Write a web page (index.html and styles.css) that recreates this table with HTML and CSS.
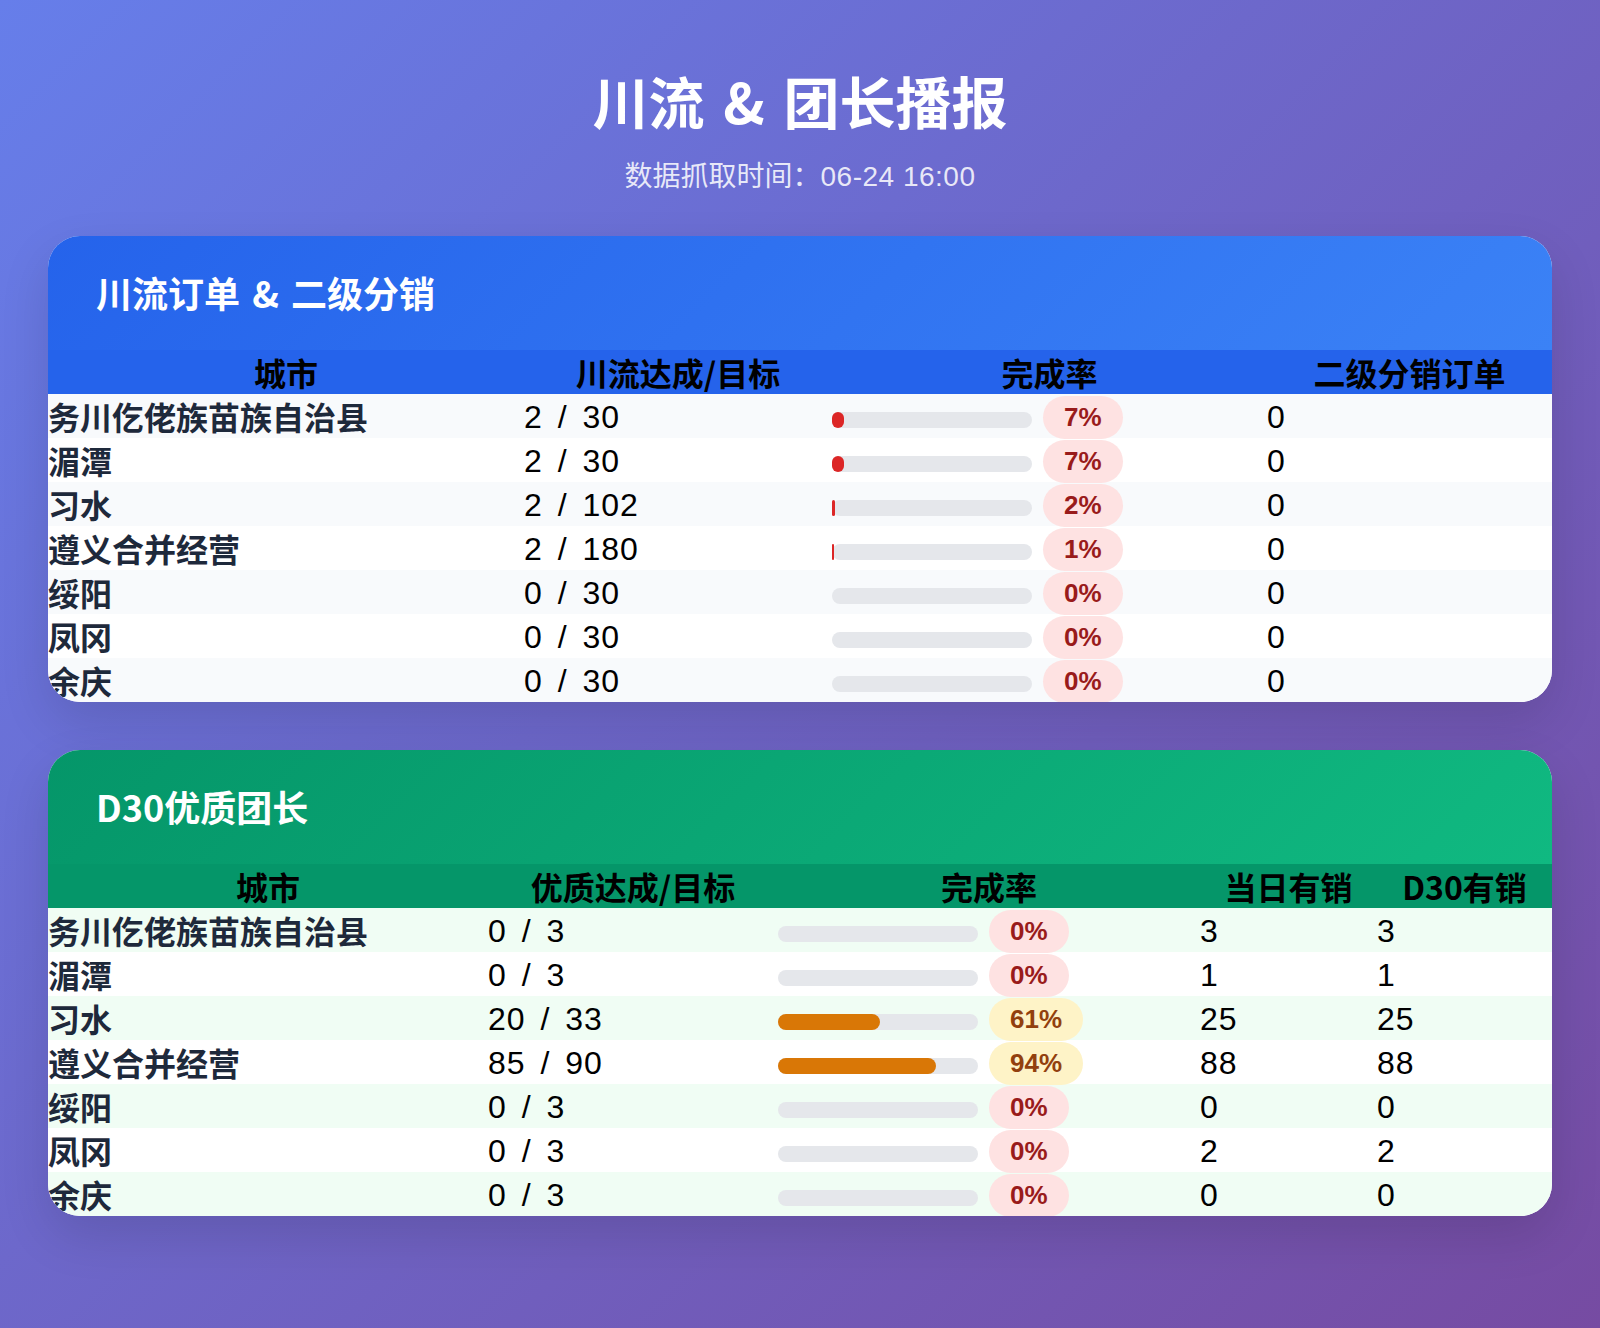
FILE: index.html
```html
<!DOCTYPE html>
<html lang="zh-CN">
<head>
<meta charset="utf-8">
<title>川流 &amp; 团长播报</title>
<link rel="stylesheet" href="styles.css">
</head>
<body>
<div class="page">
  <header class="header">
    <h1 class="title">川流 &amp; 团长播报</h1>
    <p class="subtitle">数据抓取时间：<span class="time">06-24 16:00</span></p>
  </header>

  <section class="card card-blue">
    <div class="card-head"><h2 class="card-title">川流订单 &amp; 二级分销</h2></div>
    <table class="table">
      <colgroup>
        <col class="b1"><col class="b2"><col class="b3"><col class="b4">
      </colgroup>
      <thead>
        <tr><th>城市</th><th>川流达成/目标</th><th>完成率</th><th>二级分销订单</th></tr>
      </thead>
      <tbody>
        <tr><td class="city">务川仡佬族苗族自治县</td><td class="num">2 / 30</td><td><div class="rate"><div class="track"><div class="fill fill-red" style="width:5.9%"></div></div><span class="badge badge-red">7%</span></div></td><td class="num">0</td></tr>
        <tr><td class="city">湄潭</td><td class="num">2 / 30</td><td><div class="rate"><div class="track"><div class="fill fill-red" style="width:5.9%"></div></div><span class="badge badge-red">7%</span></div></td><td class="num">0</td></tr>
        <tr><td class="city">习水</td><td class="num">2 / 102</td><td><div class="rate"><div class="track"><div class="fill fill-red" style="width:1.7%"></div></div><span class="badge badge-red">2%</span></div></td><td class="num">0</td></tr>
        <tr><td class="city">遵义合并经营</td><td class="num">2 / 180</td><td><div class="rate"><div class="track"><div class="fill fill-red" style="width:0.9%"></div></div><span class="badge badge-red">1%</span></div></td><td class="num">0</td></tr>
        <tr><td class="city">绥阳</td><td class="num">0 / 30</td><td><div class="rate"><div class="track"><div class="fill fill-red" style="width:0%"></div></div><span class="badge badge-red">0%</span></div></td><td class="num">0</td></tr>
        <tr><td class="city">凤冈</td><td class="num">0 / 30</td><td><div class="rate"><div class="track"><div class="fill fill-red" style="width:0%"></div></div><span class="badge badge-red">0%</span></div></td><td class="num">0</td></tr>
        <tr><td class="city">余庆</td><td class="num">0 / 30</td><td><div class="rate"><div class="track"><div class="fill fill-red" style="width:0%"></div></div><span class="badge badge-red">0%</span></div></td><td class="num">0</td></tr>
      </tbody>
    </table>
  </section>

  <section class="card card-green">
    <div class="card-head"><h2 class="card-title">D30优质团长</h2></div>
    <table class="table">
      <colgroup>
        <col class="g1"><col class="g2"><col class="g3"><col class="g4"><col class="g5">
      </colgroup>
      <thead>
        <tr><th>城市</th><th>优质达成/目标</th><th>完成率</th><th>当日有销</th><th>D30有销</th></tr>
      </thead>
      <tbody>
        <tr><td class="city">务川仡佬族苗族自治县</td><td class="num">0 / 3</td><td><div class="rate"><div class="track"><div class="fill fill-red" style="width:0%"></div></div><span class="badge badge-red">0%</span></div></td><td class="num">3</td><td class="num">3</td></tr>
        <tr><td class="city">湄潭</td><td class="num">0 / 3</td><td><div class="rate"><div class="track"><div class="fill fill-red" style="width:0%"></div></div><span class="badge badge-red">0%</span></div></td><td class="num">1</td><td class="num">1</td></tr>
        <tr><td class="city">习水</td><td class="num">20 / 33</td><td><div class="rate"><div class="track"><div class="fill fill-orange" style="width:51%"></div></div><span class="badge badge-amber">61%</span></div></td><td class="num">25</td><td class="num">25</td></tr>
        <tr><td class="city">遵义合并经营</td><td class="num">85 / 90</td><td><div class="rate"><div class="track"><div class="fill fill-orange" style="width:79%"></div></div><span class="badge badge-amber">94%</span></div></td><td class="num">88</td><td class="num">88</td></tr>
        <tr><td class="city">绥阳</td><td class="num">0 / 3</td><td><div class="rate"><div class="track"><div class="fill fill-red" style="width:0%"></div></div><span class="badge badge-red">0%</span></div></td><td class="num">0</td><td class="num">0</td></tr>
        <tr><td class="city">凤冈</td><td class="num">0 / 3</td><td><div class="rate"><div class="track"><div class="fill fill-red" style="width:0%"></div></div><span class="badge badge-red">0%</span></div></td><td class="num">2</td><td class="num">2</td></tr>
        <tr><td class="city">余庆</td><td class="num">0 / 3</td><td><div class="rate"><div class="track"><div class="fill fill-red" style="width:0%"></div></div><span class="badge badge-red">0%</span></div></td><td class="num">0</td><td class="num">0</td></tr>
      </tbody>
    </table>
  </section>
</div>
</body>
</html>
```
FILE: styles.css
```css
* { box-sizing: border-box; }
html, body { margin: 0; padding: 0; }
body {
  min-height: 100vh;
  background: linear-gradient(135deg, #667eea 0%, #764ba2 100%);
  font-family: "Noto Sans CJK SC", "Noto Sans", sans-serif;
}
.page { padding: 66px 48px 48px; }
.header { text-align: center; color: #fff; margin-bottom: 42px; }
.title { margin: 0; font-size: 56px; line-height: 68px; font-weight: 700; word-spacing: 6px; }
.subtitle { margin: 20px 0 0; height: 40px; font-size: 28px; line-height: 40px; color: rgba(255, 255, 255, 0.85); }
.time { font-family: "Liberation Sans", Arial, sans-serif; letter-spacing: 0.5px; line-height: 1; }

.card {
  border-radius: 32px;
  overflow: hidden;
  background: #fff;
  margin-bottom: 48px;
  box-shadow: 0 20px 50px rgba(0, 0, 0, 0.12);
}
.card-head { padding: 35px 48px 37px; }
.card-title { margin: 0; font-size: 36px; line-height: 42px; font-weight: 700; color: #fff; word-spacing: 4px; }
.card-blue .card-head { background: linear-gradient(135deg, #2563eb 0%, #3b82f6 100%); }
.card-green .card-head { background: linear-gradient(135deg, #059669 0%, #10b981 100%); }

.table { width: 100%; border-collapse: collapse; table-layout: fixed; }
.b1 { width: 476px; } .b2 { width: 308px; } .b3 { width: 435px; } .b4 { width: 285px; }
.g1 { width: 440px; } .g2 { width: 290px; } .g3 { width: 422px; } .g4 { width: 177px; } .g5 { width: 175px; }

.table th {
  height: 44px; padding: 0;
  font-size: 32px; line-height: 44px; font-weight: 700;
  color: #000; text-align: center; white-space: nowrap;
}
.card-blue .table th { background: #2563eb; }
.card-green .table th { background: #059669; }
.table td { height: 44px; padding: 0; vertical-align: middle; text-align: left; }
.card-blue tbody tr:nth-child(odd) { background: #f8fafc; }
.card-green tbody tr:nth-child(odd) { background: #f0fdf4; }

.table td.city {
  font-size: 32px; line-height: 44px; font-weight: 700;
  color: #1e293b; white-space: nowrap;
}
.table td.num {
  font-family: "Liberation Sans", Arial, sans-serif;
  font-size: 32px; line-height: 42px; padding-top: 2px;
  color: #000; word-spacing: 5px; letter-spacing: 1px; white-space: nowrap;
}

.rate { display: flex; align-items: center; gap: 11px; height: 44px; }
.track {
  flex: none; width: 200px; height: 16px; margin-top: 8px;
  background: #e5e7eb; border-radius: 8px;
}
.fill { height: 100%; border-radius: 8px; }
.fill-red { background: #dc2626; }
.fill-orange { background: #d97706; }
.badge {
  flex: none;
  font-family: "Liberation Sans", Arial, sans-serif;
  font-size: 26px; font-weight: 700; line-height: 31px;
  padding: 6px 21px; margin-top: 3px; border-radius: 22px;
}
.badge-red { background: #fee2e2; color: #991b1b; }
.badge-amber { background: #fef3c7; color: #92400e; }
```
